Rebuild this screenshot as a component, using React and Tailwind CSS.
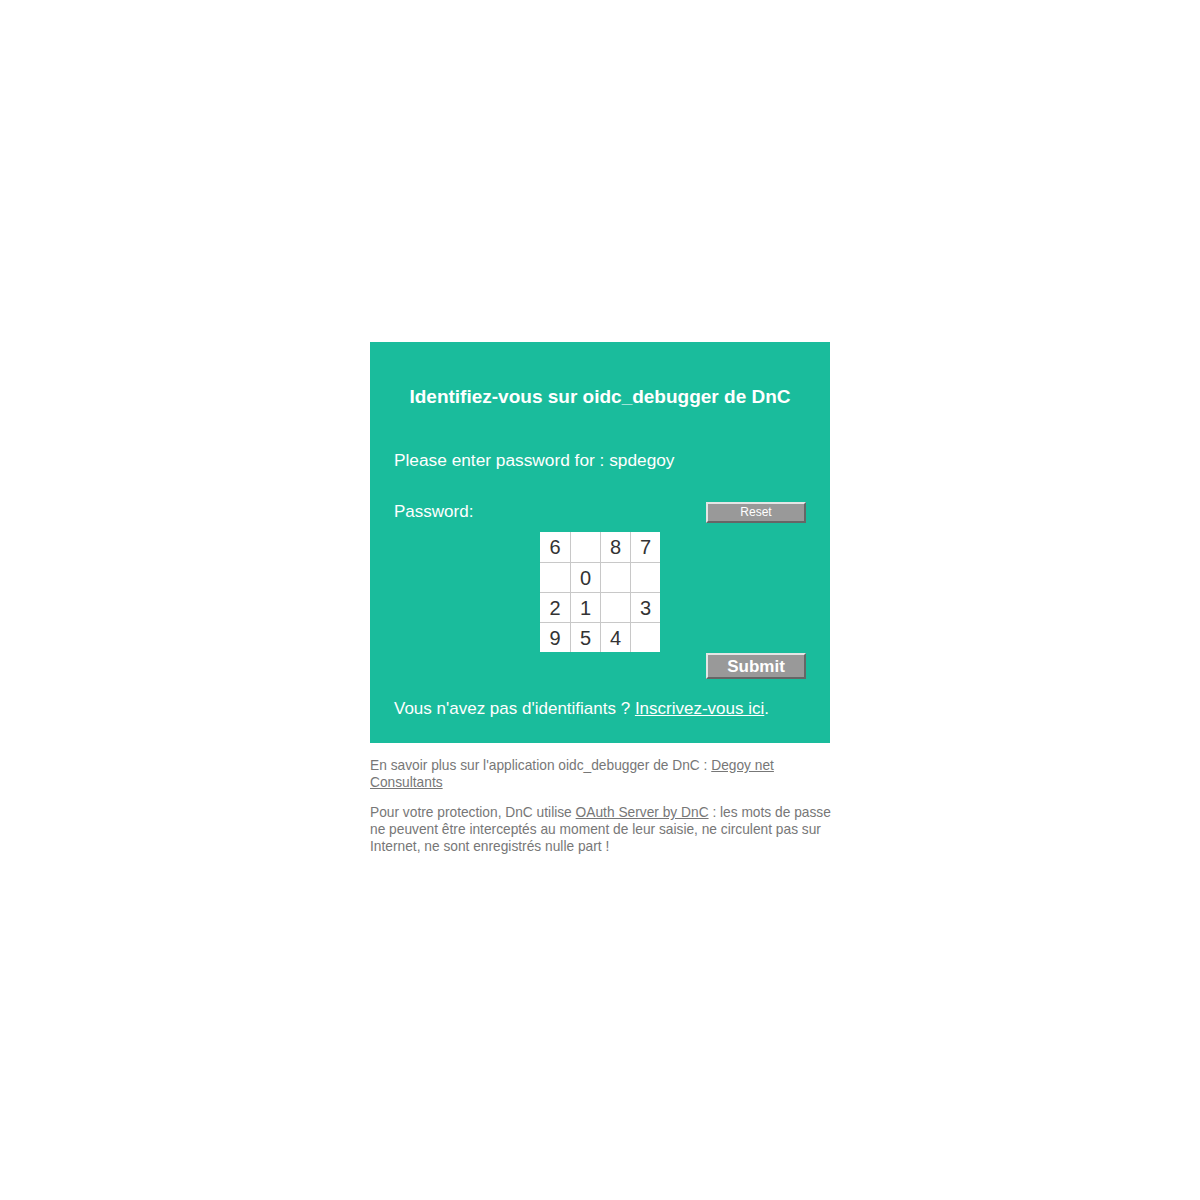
export default function App() {
  const cells = ["6", "", "8", "7", "", "0", "", "", "2", "1", "", "3", "9", "5", "4", ""];
  const font = { fontFamily: '"Liberation Sans", Arial, sans-serif' };
  return (
    <div className="min-h-[1200px] bg-white flex flex-col items-center pt-[342px]" style={font}>
      <div className="w-[460px] bg-[#1abc9c] px-6 pt-[43px] pb-[23px] text-white">
        <h2 className="text-center text-[19px] leading-[24px] font-bold">Identifiez-vous sur oidc_debugger de DnC</h2>
        <p className="mt-[40px] text-[17.3px] leading-[22px]">Please enter password for : spdegoy</p>
        <div className="mt-[30px] flex items-center justify-between h-[22px]">
          <span className="text-[17px] leading-[22px]">Password:</span>
          <button className="w-[100px] h-[21px] bg-[#999] text-white text-[12px] leading-none border-2 border-t-[#e5e5e5] border-l-[#e5e5e5] border-r-[#666] border-b-[#666]">Reset</button>
        </div>
        <div className="mt-[9px] mx-auto w-[120px] h-[120px] bg-white flex flex-wrap">
          {cells.map((c, i) => {
            const col = i % 4;
            const row = Math.floor(i / 4);
            return (
              <div
                key={i}
                className={
                  "w-[30px] h-[30px] flex items-center justify-center text-[20px] text-[#333] border-[#c8c8c8] " +
                  (col > 0 ? "border-l " : "") +
                  (row > 0 ? "border-t" : "")
                }
              >
                {c}
              </div>
            );
          })}
        </div>
        <div className="flex justify-end mt-px">
          <button className="w-[100px] h-[26px] bg-[#999] text-white text-[17px] font-bold leading-none border-2 border-t-[#e5e5e5] border-l-[#e5e5e5] border-r-[#666] border-b-[#666]">Submit</button>
        </div>
        <p className="mt-[19px] text-[17px] leading-[22px]">
          Vous n'avez pas d'identifiants ? <a href="#" className="underline">Inscrivez-vous ici</a>.
        </p>
      </div>
      <div className="w-[460px] text-[13.75px] leading-[17px] text-[#777] whitespace-nowrap">
        <p className="mt-[14px]">
          En savoir plus sur l'application oidc_debugger de DnC : <a href="#" className="underline">Degoy net</a>
          <br />
          <a href="#" className="underline">Consultants</a>
        </p>
        <p className="mt-[13px]">
          Pour votre protection, DnC utilise <a href="#" className="underline">OAuth Server by DnC</a> : les mots de passe
          <br />
          ne peuvent être interceptés au moment de leur saisie, ne circulent pas sur
          <br />
          Internet, ne sont enregistrés nulle part !
        </p>
      </div>
    </div>
  );
}
